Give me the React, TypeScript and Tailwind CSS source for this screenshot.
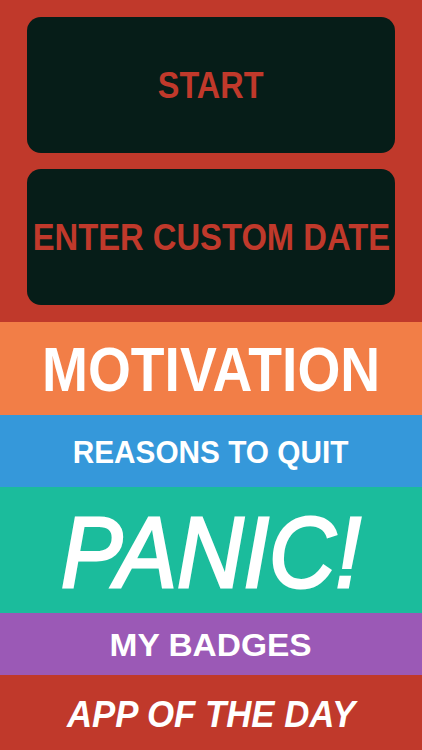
export default function App() {
  const font = { fontFamily: '"Liberation Sans", Arial, sans-serif' };
  return (
    <div className="flex h-[750px] w-full flex-col overflow-hidden bg-[#c0392b]" style={font}>
      {/* top buttons */}
      <div className="flex h-[322px] shrink-0 flex-col gap-[16px] px-[27px] py-[17px]">
        <button className="flex h-[136px] items-center justify-center rounded-[14px] bg-[#061d18] pt-[2px]">
          <span className="inline-block scale-x-[0.9] text-[36px] font-bold leading-none text-[#c0392b]">START</span>
        </button>
        <button className="flex h-[136px] items-center justify-center whitespace-nowrap rounded-[14px] bg-[#061d18] pt-[2px]">
          <span className="inline-block scale-x-[0.91] text-[36px] font-bold leading-none text-[#c0392b]">ENTER CUSTOM DATE</span>
        </button>
      </div>

      {/* menu bands */}
      <div className="flex h-[93px] shrink-0 items-center justify-center bg-[#f27e47] pt-[2px]">
        <span className="inline-block scale-x-[0.876] text-[63px] font-bold leading-none text-white">MOTIVATION</span>
      </div>
      <div className="flex h-[72px] shrink-0 items-center justify-center bg-[#3598da] pt-[3px]">
        <span className="inline-block scale-x-[0.96] text-[31px] font-bold leading-none text-white">REASONS TO QUIT</span>
      </div>
      <div className="flex h-[126px] shrink-0 items-center justify-center bg-[#1bbc9c] pt-[4px]">
        <span className="inline-block scale-x-[0.92] text-[100px] italic leading-none text-white [-webkit-text-stroke-width:3px] [-webkit-text-stroke-color:#ffffff]">PANIC!</span>
      </div>
      <div className="flex h-[62px] shrink-0 items-center justify-center bg-[#9b59b6] pt-[3px]">
        <span className="inline-block scale-x-[1.08] text-[31px] font-bold leading-none text-white">MY BADGES</span>
      </div>
      <div className="flex h-[75px] shrink-0 items-center justify-center bg-[#c0392b] pt-[5px]">
        <span className="inline-block scale-x-[0.967] text-[36px] font-bold italic leading-none text-white">APP OF THE DAY</span>
      </div>
    </div>
  );
}
